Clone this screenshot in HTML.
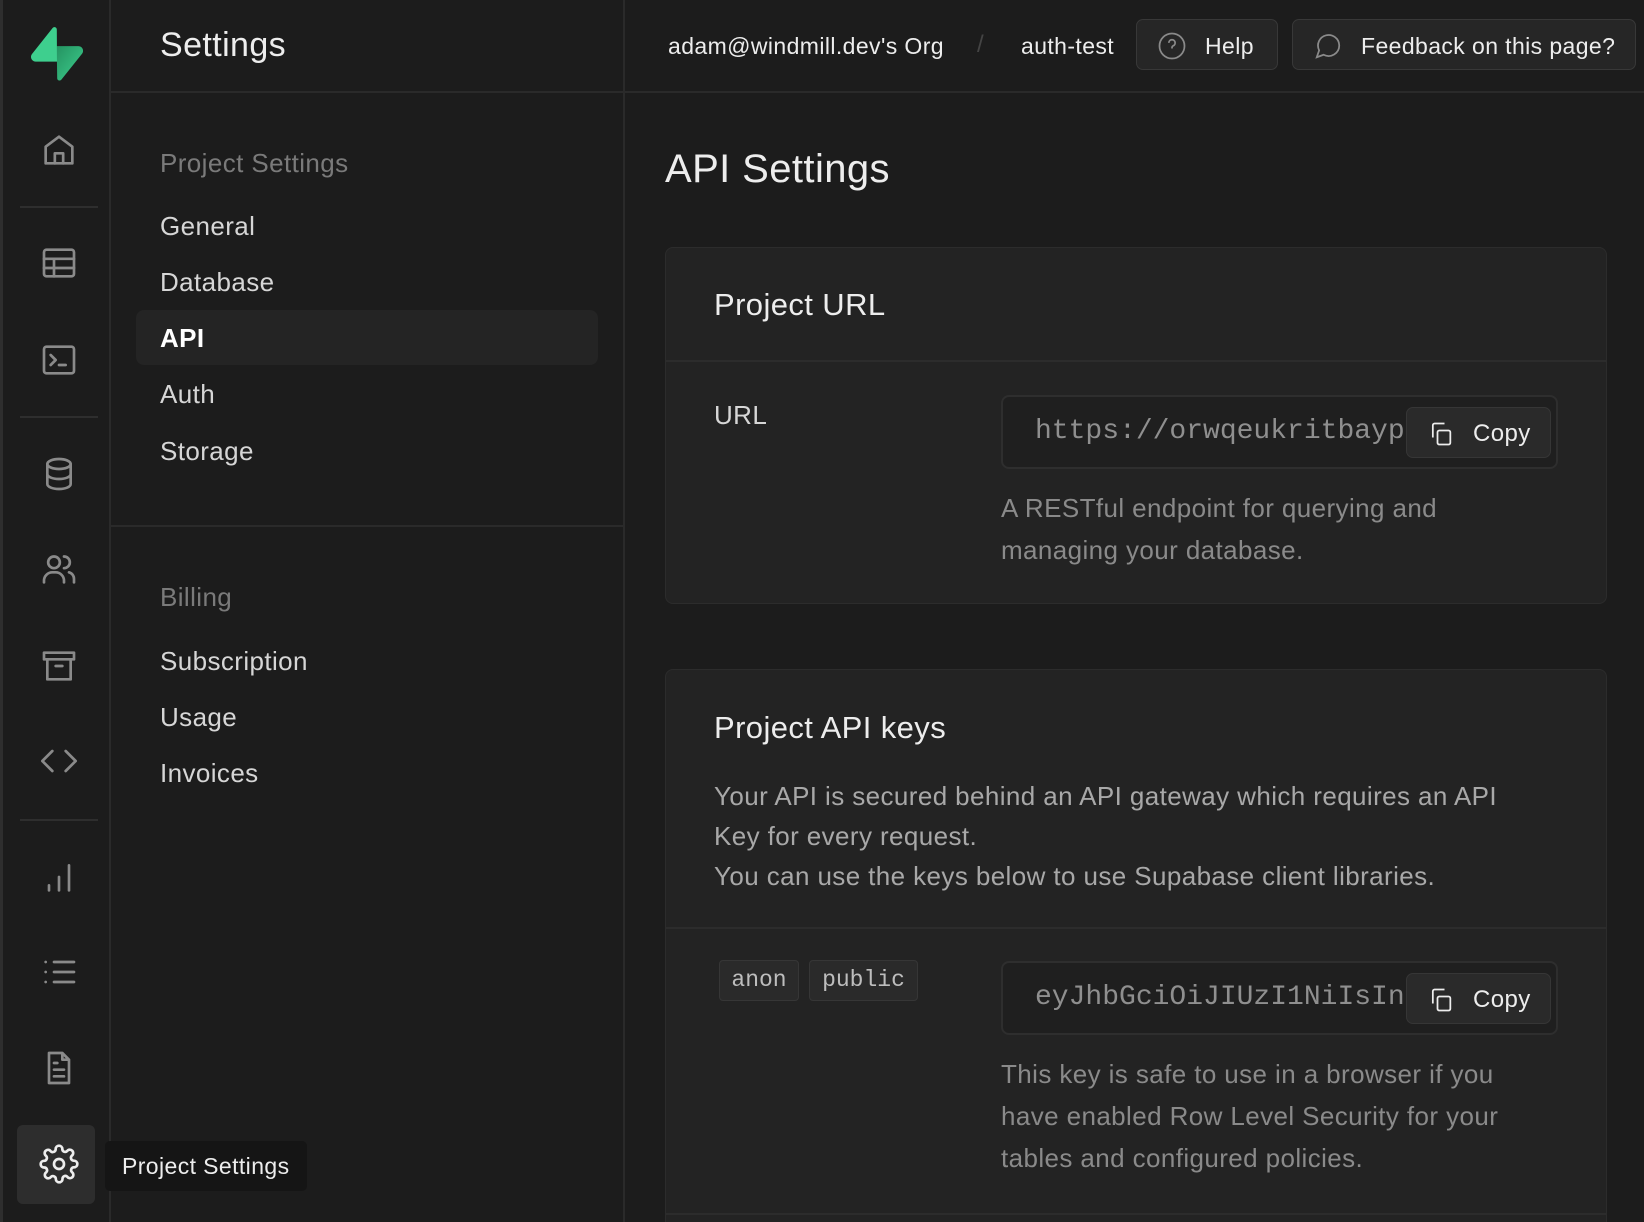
<!DOCTYPE html>
<html style="overflow:hidden;height:1222px"><head><meta charset="utf-8"><style>
*{margin:0;padding:0;box-sizing:border-box}
body{width:1644px;height:1222px;background:#1c1c1c;font-family:"Liberation Sans",sans-serif;color:#ededed;position:relative;overflow:hidden;letter-spacing:0.4px}
.a{position:absolute;white-space:nowrap}
.rail{position:absolute;left:0;top:0;width:111px;height:1222px;background:#1c1c1c;border-right:2px solid #2a2a2a;border-left:3px solid #2e2e2e}
.ic{position:absolute;left:36px;width:40px;height:40px}
.ic svg{width:40px;height:40px;fill:none;stroke:#8a8a8a;stroke-width:1.6;stroke-linecap:round;stroke-linejoin:round}
.hr{position:absolute;left:17px;width:78px;height:2px;background:#2e2e2e}
.nav{position:absolute;left:160px;font-size:26px;color:#d6d6d6}
.muted{color:#7a7a7a}
.card{position:absolute;left:665px;width:942px;background:#232323;border:1px solid #2c2c2c;border-radius:8px}
.inp{position:absolute;left:1001px;width:557px;height:74px;border:2px solid #2e2e2e;background:#1f1f1f;border-radius:8px}
.mono{font-family:"Liberation Mono",monospace;color:#8f8f8f;letter-spacing:0}
.copy{position:absolute;width:145px;height:51px;background:#2a2a2a;border:1px solid #363636;border-radius:7px;font-size:24px;color:#ededed}
.desc{font-size:26px;color:#8a8a8a;line-height:42px}
.btn{position:absolute;top:19px;height:51px;background:#262626;border:1px solid #383838;border-radius:7px;font-size:23px}
</style></head><body>
<div class="rail">
 <svg class="a" style="left:28px;top:27px" width="52" height="54" viewBox="0 0 109 113"><defs><linearGradient id="g" x1="0" y1="0" x2="1" y2="1"><stop offset="0" stop-color="#249361"/><stop offset="1" stop-color="#3ecf8e"/></linearGradient></defs><path d="M63.7 110.3c-2.9 3.6-8.7 1.6-8.8-3l-1-67.3h45.4c8.2 0 12.8 9.5 7.7 15.9z" fill="url(#g)"/><path d="M45.3 2.1c2.9-3.6 8.7-1.6 8.8 3l.4 67.3H9.8c-8.2 0-12.8-9.5-7.7-15.9z" fill="#3ecf8e"/></svg>
 <div class="ic" style="top:130px"><svg viewBox="0 0 24 24"><path d="M4 10l8-6 8 6v10H4z"/><path d="M9.5 20v-6h5v6"/></svg></div>
 <div class="hr" style="top:206px"></div>
 <div class="ic" style="top:243px"><svg viewBox="0 0 24 24"><rect x="3" y="4" width="18" height="16" rx="1.5"/><path d="M3 9.5h18M3 15h18M9 9.5V20"/></svg></div>
 <div class="ic" style="top:340px"><svg viewBox="0 0 24 24"><rect x="3" y="4" width="18" height="16" rx="1.5"/><path d="M7 9l3 3-3 3M12 15h4"/></svg></div>
 <div class="hr" style="top:416px"></div>
 <div class="ic" style="top:454px"><svg viewBox="0 0 24 24"><ellipse cx="12" cy="6" rx="7" ry="3"/><path d="M5 6v12c0 1.7 3.1 3 7 3s7-1.3 7-3V6M5 12c0 1.7 3.1 3 7 3s7-1.3 7-3"/></svg></div>
 <div class="ic" style="top:549px"><svg viewBox="0 0 24 24"><circle cx="9" cy="8" r="3.5"/><path d="M3 20v-1a5 5 0 0 1 5-5h2a5 5 0 0 1 5 5v1M15 4.5a3.5 3.5 0 0 1 0 7M18 14a4 4 0 0 1 3 4v2"/></svg></div>
 <div class="ic" style="top:646px"><svg viewBox="0 0 24 24"><rect x="3" y="4" width="18" height="4"/><path d="M5 8v12h14V8M10 12h4"/></svg></div>
 <div class="ic" style="top:741px"><svg viewBox="0 0 24 24"><path d="M8 6l-6 6 6 6M16 6l6 6-6 6"/></svg></div>
 <div class="hr" style="top:819px"></div>
 <div class="ic" style="top:857px"><svg viewBox="0 0 24 24"><path d="M6 20v-3M12 20v-8M18 20V5"/></svg></div>
 <div class="ic" style="top:952px"><svg viewBox="0 0 24 24"><path d="M9 6h12M9 12h12M9 18h12M4 6h.01M4 12h.01M4 18h.01"/></svg></div>
 <div class="ic" style="top:1048px"><svg viewBox="0 0 24 24"><path d="M14 3H6v18h12V7z M14 3v4h4M9 9h2M9 13h6M9 17h6"/></svg></div>
 <div class="a" style="left:14px;top:1125px;width:78px;height:79px;background:#2d2d2d;border-radius:6px"></div>
 <div class="ic" style="top:1144px"><svg viewBox="0 0 24 24" style="stroke:#ededed"><circle cx="12" cy="12" r="3"/><path d="M19.4 15a1.7 1.7 0 0 0 .3 1.8l.1.1a2 2 0 1 1-2.8 2.8l-.1-.1a1.7 1.7 0 0 0-1.8-.3 1.7 1.7 0 0 0-1 1.5V21a2 2 0 1 1-4 0v-.1a1.7 1.7 0 0 0-1.1-1.5 1.7 1.7 0 0 0-1.8.3l-.1.1a2 2 0 1 1-2.8-2.8l.1-.1a1.7 1.7 0 0 0 .3-1.800 1.7 1.7 0 0 0-1.5-1H3a2 2 0 1 1 0-4h.1a1.7 1.7 0 0 0 1.5-1.1 1.7 1.7 0 0 0-.3-1.8l-.1-.1a2 2 0 1 1 2.8-2.8l.1.1a1.7 1.7 0 0 0 1.8.3H9a1.7 1.7 0 0 0 1-1.5V3a2 2 0 1 1 4 0v.1a1.7 1.7 0 0 0 1 1.5 1.7 1.7 0 0 0 1.8-.3l.1-.1a2 2 0 1 1 2.8 2.8l-.1.1a1.7 1.7 0 0 0-.3 1.8V9a1.7 1.7 0 0 0 1.5 1H21a2 2 0 1 1 0 4h-.1a1.7 1.7 0 0 0-1.5 1z"/></svg></div>
</div>
<div class="a" style="left:623px;top:0;width:2px;height:1222px;background:#2a2a2a"></div>
<div class="a" style="left:111px;top:91px;width:1533px;height:2px;background:#2a2a2a"></div>
<div class="a" style="left:111px;top:525px;width:512px;height:2px;background:#2a2a2a"></div>
<div class="a" style="left:160px;top:26px;font-size:34px;color:#ededed">Settings</div>
<div class="nav muted" style="top:148px">Project Settings</div>
<div class="nav" style="top:211px">General</div>
<div class="nav" style="top:267px">Database</div>
<div class="a" style="left:136px;top:310px;width:462px;height:55px;background:#242424;border-radius:8px"></div>
<div class="nav" style="top:323px;color:#fff;font-weight:bold">API</div>
<div class="nav" style="top:379px">Auth</div>
<div class="nav" style="top:436px">Storage</div>
<div class="nav muted" style="top:582px">Billing</div>
<div class="nav" style="top:646px">Subscription</div>
<div class="nav" style="top:702px">Usage</div>
<div class="nav" style="top:758px">Invoices</div>
<div class="a" style="left:105px;top:1141px;width:202px;height:50px;background:#151515;border-radius:5px"></div>
<div class="a" style="left:122px;top:1153px;font-size:23px;color:#ededed">Project Settings</div>
<div class="a" style="left:668px;top:33px;font-size:23px">adam@windmill.dev's Org</div>
<div class="a" style="left:977px;top:31px;font-size:24px;color:#444">/</div>
<div class="a" style="left:1021px;top:33px;font-size:23px">auth-test</div>
<div class="btn" style="left:1136px;width:142px"><svg class="a" style="left:20px;top:11px" width="30" height="30" viewBox="0 0 24 24" fill="none" stroke="#8a8a8a" stroke-width="1.4"><circle cx="12" cy="12" r="10"/><path d="M9.5 9.5a2.5 2.5 0 1 1 3.5 2.3c-.6.3-1 .8-1 1.5v.7M12 17h.01"/></svg><span class="a" style="left:68px;top:13px">Help</span></div>
<div class="btn" style="left:1292px;width:344px"><svg class="a" style="left:20px;top:11px" width="30" height="30" viewBox="0 0 24 24" fill="none" stroke="#8a8a8a" stroke-width="1.4"><path d="M21 11.5a8.5 8.5 0 0 1-12.5 7.5L3 21l1.9-5.5A8.5 8.5 0 1 1 21 11.5z"/></svg><span class="a" style="left:68px;top:13px">Feedback on this page?</span></div>
<div class="a" style="left:665px;top:147px;font-size:40px">API Settings</div>
<div class="card" style="top:247px;height:357px"></div>
<div class="a" style="left:666px;top:360px;width:940px;height:2px;background:#2c2c2c"></div>
<div class="a" style="left:714px;top:287px;font-size:31px">Project URL</div>
<div class="a" style="left:714px;top:400px;font-size:26px;color:#d6d6d6">URL</div>
<div class="inp" style="top:395px"><span class="a mono" style="left:32px;top:19px;font-size:28px">https://orwqeukritbayp</span></div>
<div class="copy" style="left:1406px;top:407px"><svg class="a" style="left:20px;top:12px" width="28" height="28" viewBox="0 0 24 24" fill="none" stroke="#ededed" stroke-width="1.5"><rect x="9" y="9" width="11" height="12" rx="1.5"/><path d="M5 15V4.5A1.5 1.5 0 0 1 6.5 3H15"/></svg><span class="a" style="left:66px;top:12px">Copy</span></div>
<div class="a desc" style="left:1001px;top:487px">A RESTful endpoint for querying and<br>managing your database.</div>
<div class="card" style="top:669px;height:580px"></div>
<div class="a" style="left:714px;top:710px;font-size:31px">Project API keys</div>
<div class="a" style="left:714px;top:776px;font-size:26px;color:#a8a8a8;line-height:40px">Your API is secured behind an API gateway which requires an API<br>Key for every request.<br>You can use the keys below to use Supabase client libraries.</div>
<div class="a" style="left:666px;top:927px;width:940px;height:2px;background:#2c2c2c"></div>
<div class="a mono" style="left:719px;top:960px;width:80px;height:41px;background:#2a2a2a;border:1px solid #363636;border-radius:4px;font-size:23px;color:#bdbdbd;text-align:center;line-height:39px">anon</div>
<div class="a mono" style="left:809px;top:960px;width:109px;height:41px;background:#2a2a2a;border:1px solid #363636;border-radius:4px;font-size:23px;color:#bdbdbd;text-align:center;line-height:39px">public</div>
<div class="inp" style="top:961px"><span class="a mono" style="left:32px;top:19px;font-size:28px">eyJhbGciOiJIUzI1NiIsIn</span></div>
<div class="copy" style="left:1406px;top:973px"><svg class="a" style="left:20px;top:12px" width="28" height="28" viewBox="0 0 24 24" fill="none" stroke="#ededed" stroke-width="1.5"><rect x="9" y="9" width="11" height="12" rx="1.5"/><path d="M5 15V4.5A1.5 1.5 0 0 1 6.5 3H15"/></svg><span class="a" style="left:66px;top:12px">Copy</span></div>
<div class="a desc" style="left:1001px;top:1053px">This key is safe to use in a browser if you<br>have enabled Row Level Security for your<br>tables and configured policies.</div>
<div class="a" style="left:666px;top:1213px;width:940px;height:2px;background:#2c2c2c"></div>
</body></html>
